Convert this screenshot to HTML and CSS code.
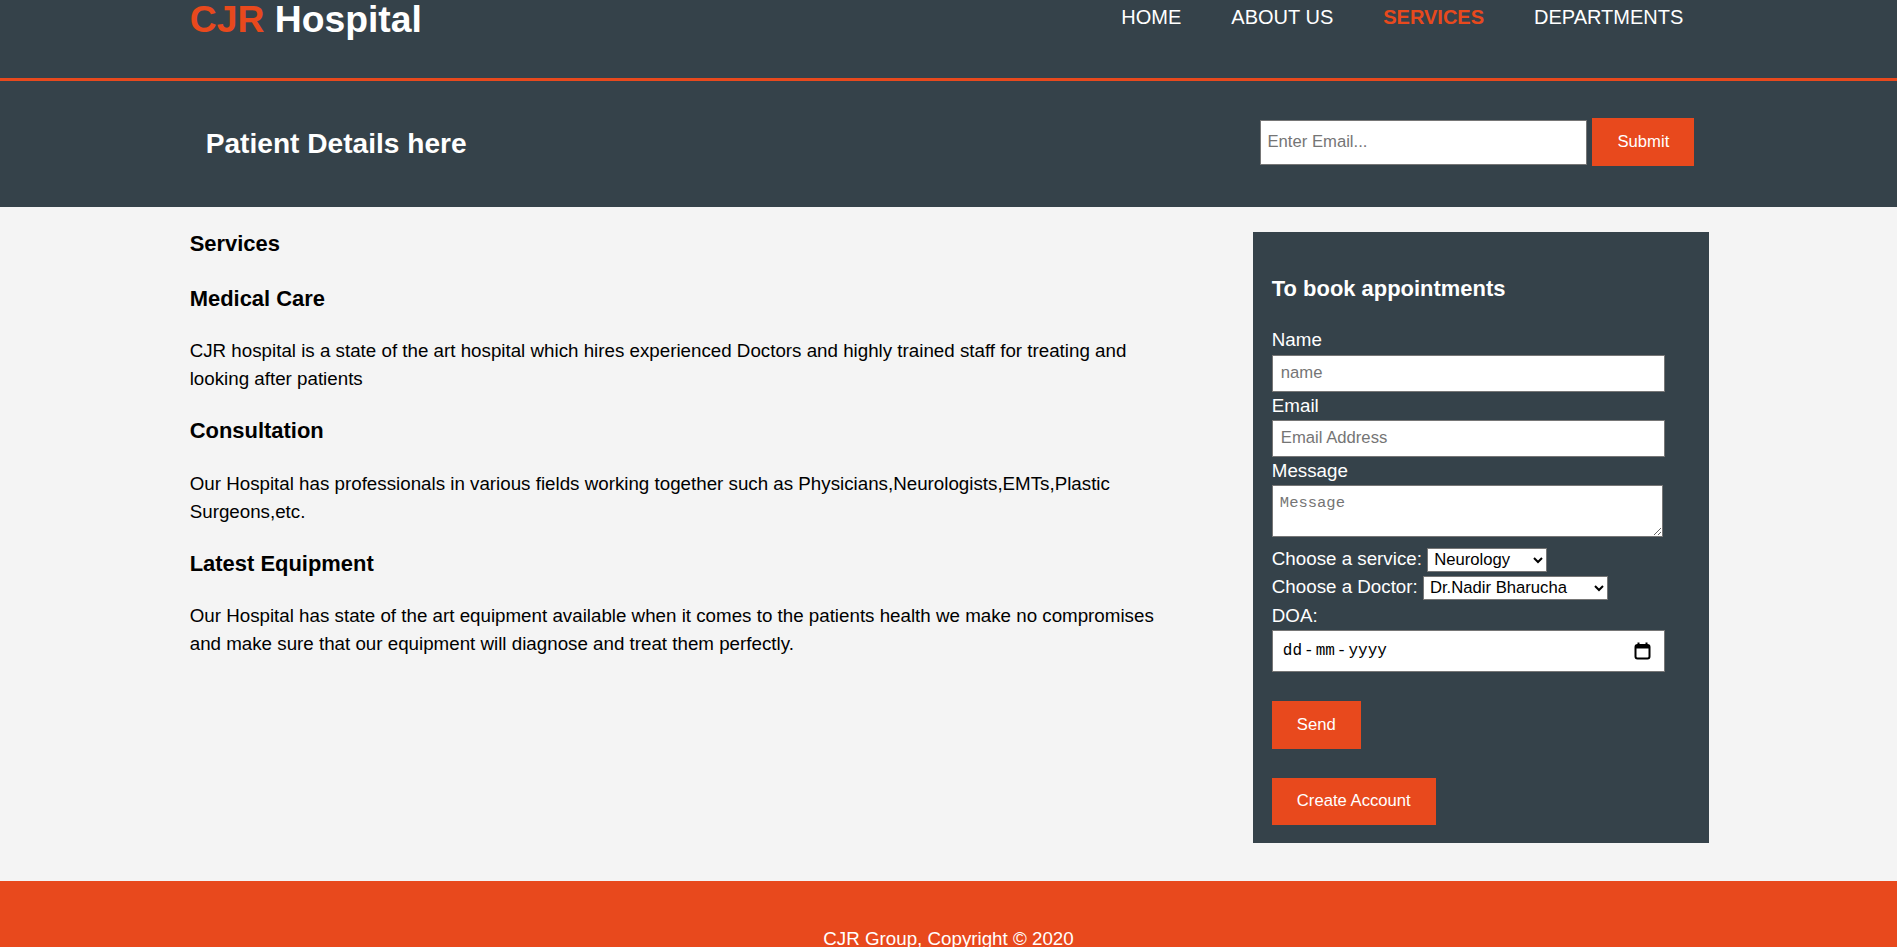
FILE: index.html
```
<!DOCTYPE html>
<html lang="en">
<head>
<meta charset="utf-8">
<title>CJR Hospital | Services</title>
<link rel="stylesheet" href="styles.css">
</head>
<body>
<header class="site-header">
  <div class="container header-inner">
    <div class="branding">
      <h1 class="logo"><span class="highlight">CJR</span> Hospital</h1>
    </div>
    <nav class="main-nav">
      <ul class="nav-list">
        <li class="nav-item"><a href="#">Home</a></li>
        <li class="nav-item"><a href="#">About Us</a></li>
        <li class="nav-item current"><a href="#">Services</a></li>
        <li class="nav-item"><a href="#">Departments</a></li>
      </ul>
    </nav>
  </div>
</header>

<section class="newsletter">
  <div class="container newsletter-inner">
    <h2 class="newsletter-title">Patient Details here</h2>
    <form class="newsletter-form">
      <input class="newsletter-email" type="email" placeholder="Enter Email...">
      <button class="button-1 newsletter-btn" type="submit">Submit</button>
    </form>
  </div>
</section>

<div class="container main-wrap">
  <article class="main-col">
    <h3 class="section-title">Services</h3>
    <h3 class="section-title">Medical Care</h3>
    <p class="section-text">CJR hospital is a state of the art hospital which hires experienced Doctors and highly trained staff for treating and looking after patients</p>
    <h3 class="section-title">Consultation</h3>
    <p class="section-text">Our Hospital has professionals in various fields working together such as Physicians,Neurologists,EMTs,Plastic Surgeons,etc.</p>
    <h3 class="section-title">Latest Equipment</h3>
    <p class="section-text">Our Hospital has state of the art equipment available when it comes to the patients health we make no compromises and make sure that our equipment will diagnose and treat them perfectly.</p>
  </article>

  <aside class="sidebar">
    <form class="quote">
      <h3 class="quote-title">To book appointments</h3>
      <label class="field-label">Name</label>
      <input class="field-input" type="text" placeholder="name">
      <label class="field-label">Email</label>
      <input class="field-input" type="text" placeholder="Email Address">
      <label class="field-label">Message</label>
      <textarea class="field-textarea" placeholder="Message"></textarea>
      <div class="choice-line">Choose a service: <select class="choice-select service-select"><option>Neurology</option><option>Cardiology</option><option>Orthopedics</option></select></div>
      <div class="choice-line">Choose a Doctor: <select class="choice-select doctor-select"><option>Dr.Nadir Bharucha</option><option>Dr.Other</option></select></div>
      <label class="field-label">DOA:</label>
      <div class="date-field">
        <span class="date-text"><span>dd</span><span class="date-sep">-</span><span>mm</span><span class="date-sep">-</span><span>yyyy</span></span>
        <svg class="date-icon" width="17" height="18" viewBox="0 0 17 18" aria-hidden="true">
          <rect x="1.5" y="3" width="14" height="13.5" rx="2" fill="none" stroke="#000" stroke-width="2"/>
          <rect x="1.5" y="3" width="14" height="3.5" fill="#000"/>
          <rect x="3.5" y="0.5" width="2" height="3" fill="#000"/>
          <rect x="11.5" y="0.5" width="2" height="3" fill="#000"/>
        </svg>
      </div>
      <button class="button-1 send-btn" type="submit">Send</button>
      <button class="button-1 account-btn" type="button">Create Account</button>
    </form>
  </aside>
</div>

<footer class="site-footer">
  <p class="footer-text">CJR Group, Copyright &copy; 2020</p>
</footer>
</body>
</html>
```
FILE: styles.css
```
* {
  box-sizing: border-box;
}

body {
  margin: 0;
  padding: 0;
  font-family: "Liberation Sans", Arial, sans-serif;
  font-size: 18.75px;
  line-height: 28px;
  background-color: #f4f4f4;
  color: #000;
}

.container {
  width: 80%;
  margin: 0 auto;
}

/* Header */
.site-header {
  background: #35424a;
  color: #fff;
  height: 81px;
  border-bottom: 3px solid #e8491d;
}

.header-inner {
  display: flex;
  justify-content: space-between;
  align-items: flex-start;
}

.logo {
  margin: 0;
  padding-top: 0.5px;
  font-size: 37.3px;
  line-height: 37px;
  font-weight: bold;
}

.highlight {
  color: #e8491d;
}

.main-nav {
  margin-top: 2px;
  margin-right: -1px;
}

.nav-list {
  display: flex;
  list-style: none;
  margin: 0;
  padding: 0;
}

.nav-item a {
  display: block;
  padding: 0 25px;
  color: #fff;
  text-decoration: none;
  text-transform: uppercase;
  font-size: 20px;
  line-height: 30px;
}

.nav-item:first-child a {
  padding-left: 27px;
}

.nav-item.current a {
  color: #e8491d;
  font-weight: bold;
}

/* Newsletter band */
.newsletter {
  background: #35424a;
  color: #fff;
  padding: 18.75px 0;
}

.newsletter-inner {
  display: flex;
  justify-content: space-between;
  align-items: flex-start;
}

.newsletter-title {
  margin: 23px 0 23px 16px;
  font-size: 28.125px;
  line-height: 42px;
}

.newsletter-form {
  display: flex;
  align-items: center;
  gap: 5px;
  margin-top: 18.5px;
  margin-right: 13px;
}

.newsletter-email {
  width: 327px;
  height: 45px;
  border: 1px solid #767676;
  padding: 0 6px;
  font-family: "Liberation Sans", Arial, sans-serif;
  font-size: 16.67px;
  background: #fff;
  color: #000;
}

.newsletter-email::placeholder,
.field-input::placeholder,
.field-textarea::placeholder {
  color: #757575;
}

.button-1 {
  display: block;
  background: #e8491d;
  color: #fff;
  border: 0;
  padding: 0 25px;
  font-family: "Liberation Sans", Arial, sans-serif;
  font-size: 16.67px;
  cursor: pointer;
}

.newsletter-btn {
  height: 47.5px;
}

/* Main area */
.main-wrap {
  display: flex;
  justify-content: space-between;
  align-items: flex-start;
}

.main-col {
  width: 65%;
}

.section-title {
  font-size: 21.94px;
  line-height: 32.5px;
  margin: 21.94px 0;
}

.section-text {
  margin: 18.75px 0;
}

/* Sidebar */
.sidebar {
  width: calc(30% + 1px);
  margin-top: 25.3px;
  margin-right: -1.5px;
  margin-bottom: 12.5px;
  padding: 18.75px 18.75px 18.75px 19.3px;
  background: #35424a;
  color: #fff;
}

.quote-title {
  font-size: 21.94px;
  line-height: 33px;
  margin: 21.94px 0 21px;
}

.field-label {
  display: block;
  line-height: 28.125px;
}

.field-input {
  display: block;
  width: 393.5px;
  height: 37px;
  border: 1px solid #767676;
  padding: 0 8px;
  font-family: "Liberation Sans", Arial, sans-serif;
  font-size: 16.67px;
  background: #fff;
  color: #000;
}

.field-textarea {
  display: block;
  width: 391px;
  height: 52px;
  margin: 0.5px 0 8px;
  border: 1px solid #767676;
  padding: 8px 7px 4px;
  font-family: "Liberation Mono", "DejaVu Sans Mono", monospace;
  font-size: 15.5px;
  line-height: 1.2;
  background: #fff;
  color: #000;
}

.choice-line {
  line-height: 28.125px;
  white-space: nowrap;
}

.choice-select {
  height: 23.4px;
  border: 1px solid #767676;
  background-color: #fff;
  color: #000;
  font-family: "Liberation Sans", Arial, sans-serif;
  font-size: 16.67px;
  padding: 0 0 0 2px;
  vertical-align: baseline;
}

.service-select {
  width: 119.5px;
}

.doctor-select {
  width: 185px;
}

.date-field {
  display: flex;
  align-items: center;
  justify-content: space-between;
  width: 393.5px;
  height: 41.3px;
  margin-top: 0.5px;
  padding: 0 13px 0 10px;
  background: #fff;
  border: 1px solid #767676;
  color: #000;
}

.date-text {
  display: flex;
  font-family: "Liberation Mono", "DejaVu Sans Mono", monospace;
  font-size: 16px;
  line-height: 1;
}

.date-sep {
  margin: 0 2px;
}

.date-icon {
  display: block;
}

.send-btn {
  margin-top: 29.5px;
  height: 48px;
}

.account-btn {
  margin-top: 28.5px;
  height: 47px;
}

/* Footer */
.site-footer {
  margin-top: 25px;
  padding: 25px;
  background-color: #e8491d;
  color: #fff;
  text-align: center;
}

.footer-text {
  margin: 18.75px 0;
}
```
